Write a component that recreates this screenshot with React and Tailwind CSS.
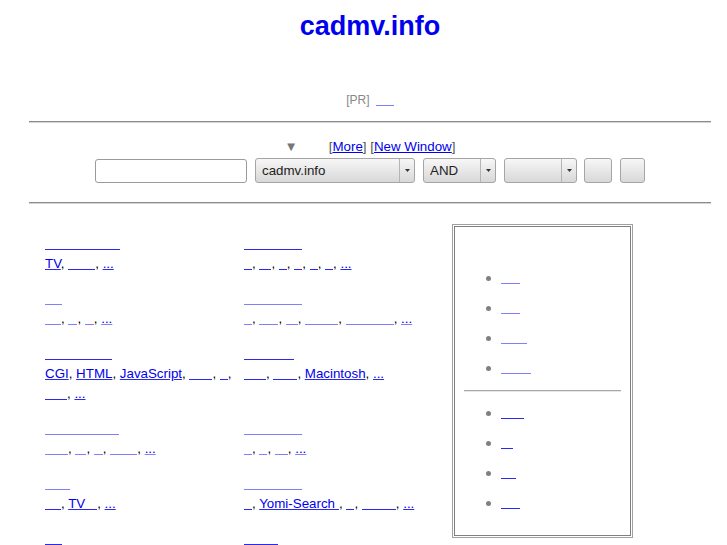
import React from 'react';

const LINK = 'text-[#0000ee]';

// blank link text (glyphs that never drew), only the underline shows
function Blank({ w, light }) {
    return (
        <span
            className={`inline-block h-[3px] align-[-2px] border-b ${w} ${light ? 'border-b-[#8080ff]' : 'border-b-[#2a2aee]'}`}
        />
    );
}

function Lnk({ it, light }) {
    const deco = light ? 'decoration-[#8080ff]' : 'decoration-[#2a2aee]';
    return (
        <a className={LINK}>
            {it.t && <span className={`underline ${deco}`}>{it.t}</span>}
            {it.w && <Blank w={it.w} light={light} />}
        </a>
    );
}

function Cat({ cat }) {
    return (
        <div className="pb-[15px] leading-[20px]">
            <div>
                <Blank w={cat.title} light={cat.tl} />
            </div>
            {cat.items && (
                <div>
                    {cat.items.map((it, i) => (
                        <span key={i}>
                            <Lnk it={it} light={cat.sl} />,{' '}
                        </span>
                    ))}
                    <a className={`${LINK} underline ${cat.sl ? 'decoration-[#8080ff]' : 'decoration-[#2a2aee]'}`}>...</a>
                </div>
            )}
        </div>
    );
}

const rows = [
    [
        { title: 'w-[75px]', items: [{ t: 'TV' }, { w: 'w-[27px]' }] },
        { title: 'w-[58px]', items: [{ w: 'w-[8px]' }, { w: 'w-[12px]' }, { w: 'w-[8px]' }, { w: 'w-[8px]' }, { w: 'w-[8px]' }, { w: 'w-[8px]' }] },
    ],
    [
        { title: 'w-[17px]', tl: true, sl: true, items: [{ w: 'w-[16px]' }, { w: 'w-[9px]' }, { w: 'w-[9px]' }] },
        { title: 'w-[58px]', tl: true, sl: true, items: [{ w: 'w-[8px]' }, { w: 'w-[19px]' }, { w: 'w-[12px]' }, { w: 'w-[33px]' }, { w: 'w-[48px]' }] },
    ],
    [
        { title: 'w-[67px]', items: [{ t: 'CGI' }, { t: 'HTML' }, { t: 'JavaScript' }, { w: 'w-[23px]' }, { w: 'w-[8px]' }, { w: 'w-[22px]' }] },
        { title: 'w-[50px]', items: [{ w: 'w-[22px]' }, { w: 'w-[24px]' }, { t: 'Macintosh' }] },
    ],
    [
        { title: 'w-[74px]', tl: true, sl: true, items: [{ w: 'w-[23px]' }, { w: 'w-[11px]' }, { w: 'w-[9px]' }, { w: 'w-[27px]' }] },
        { title: 'w-[58px]', tl: true, sl: true, items: [{ w: 'w-[8px]' }, { w: 'w-[8px]' }, { w: 'w-[13px]' }] },
    ],
    [
        { title: 'w-[25px]', tl: true, items: [{ w: 'w-[16px]' }, { t: 'TV', w: 'w-[12px]' }] },
        { title: 'w-[58px]', tl: true, items: [{ w: 'w-[8px]' }, { t: 'Yomi-Search', w: 'w-[4px]' }, { w: 'w-[8px]' }, { w: 'w-[34px]' }] },
    ],
    [
        { title: 'w-[17px]' },
        { title: 'w-[34px]' },
    ],
];

const boxTop = [
    { w: 'w-[19px]' }, { w: 'w-[19px]' }, { w: 'w-[26px]' }, { w: 'w-[30px]' },
];
const boxBottom = [
    { w: 'w-[23px]' }, { w: 'w-[12px]' }, { w: 'w-[15px]' }, { w: 'w-[19px]' },
];

function BoxItem({ it, light }) {
    return (
        <li className="flex items-center gap-[10px] pl-[31px] h-[30px]">
            <span className="w-[5px] h-[5px] rounded-full bg-[#808080]" />
            <span className="leading-[30px]">
                <Blank w={it.w} light={light} />
            </span>
        </li>
    );
}

function Select({ w, label }) {
    return (
        <div className={`${w} h-[25px] flex rounded-[3px] border border-[#a5a5a5] bg-linear-to-b from-[#f7f7f7] to-[#d8d8d8]`}>
            <span className="flex-1 pl-[6px] leading-[23px] text-[#222] whitespace-nowrap overflow-hidden">{label}</span>
            <span className="w-[15px] border-l border-[#b5b5b5] flex items-center justify-center">
                <svg width="5" height="3" viewBox="0 0 5 3">
                    <path d="M0 0h5L2.5 3z" fill="#333" />
                </svg>
            </span>
        </div>
    );
}

function Hr() {
    return <div className="mx-[29px] h-[2px] border-t border-t-[#8c8c8c] border-b border-b-[#d4d4d4]" />;
}

export default function App() {
    return (
        <div className="w-full min-h-[545px] overflow-hidden bg-white">
            <div className="w-[740px] font-['Liberation_Sans',Arial,sans-serif] text-[13.33px] text-black">
                <h1 className="pt-[11px] text-center text-[27px] leading-[31px] font-bold text-[#0000ee]">cadmv.info</h1>

                <div className="mt-[51px] text-center text-[12px] leading-[14px]">
                    <span className="text-[#888]">[PR]</span>{' '}
                    <span className="leading-[14px] ml-[3px]">
                        <Blank w="w-[18px]" light />
                    </span>
                </div>

                <div className="mt-[14px]">
                    <Hr />
                </div>

                <div className="mt-[16px] text-center leading-[16px]">
                    <span className="text-[#777]">▼</span>
                    <span className="inline-block w-[31px]" />
                    <span className="text-[#555]">[</span>
                    <a className={`${LINK} underline`}>More</a>
                    <span className="text-[#555]">]</span>{' '}
                    <span className="text-[#555]">[</span>
                    <a className={`${LINK} underline`}>New Window</a>
                    <span className="text-[#555]">]</span>
                </div>

                <div className="mt-[3px] flex justify-center items-start">
                    <input
                        type="text"
                        className="mt-px w-[152px] h-[24px] rounded-[3px] border border-[#9b9b9b] bg-white outline-none"
                    />
                    <div className="ml-[8px]">
                        <Select w="w-[160px]" label="cadmv.info" />
                    </div>
                    <div className="ml-[8px]">
                        <Select w="w-[73px]" label="AND" />
                    </div>
                    <div className="ml-[8px]">
                        <Select w="w-[73px]" label="" />
                    </div>
                    <button className="ml-[7px] w-[28px] h-[25px] rounded-[3px] border border-[#a5a5a5] bg-linear-to-b from-[#f7f7f7] to-[#d8d8d8]" />
                    <button className="ml-[8px] w-[25px] h-[25px] rounded-[3px] border border-[#a5a5a5] bg-linear-to-b from-[#f7f7f7] to-[#d8d8d8]" />
                </div>

                <div className="mt-[19px]">
                    <Hr />
                </div>

                <div className="mx-[29px] mt-[20px] flex items-start">
                    <div className="mt-[10px] pl-[16px] grid grid-cols-[199px_200px]">
                        {rows.map((r, i) => (
                            <React.Fragment key={i}>
                                <div className="pr-[9px]">
                                    <Cat cat={r[0]} />
                                </div>
                                <div>
                                    <Cat cat={r[1]} />
                                </div>
                            </React.Fragment>
                        ))}
                    </div>

                    <div className="ml-[8px] w-[181px] h-[314px] border border-[#a0a0a0] p-px">
                        <div className="h-full border border-[#7f7f7f] pt-[36px]">
                            <ul>
                                {boxTop.map((it, i) => (
                                    <BoxItem key={i} it={it} light />
                                ))}
                            </ul>
                            <div className="mx-[9px] mt-[7px] mb-[6px] h-[2px] border-t border-t-[#a8a8a8] border-b border-b-[#e6e6e6]" />
                            <ul>
                                {boxBottom.map((it, i) => (
                                    <BoxItem key={i} it={it} />
                                ))}
                            </ul>
                        </div>
                    </div>
                </div>
            </div>
        </div>
    );
}
